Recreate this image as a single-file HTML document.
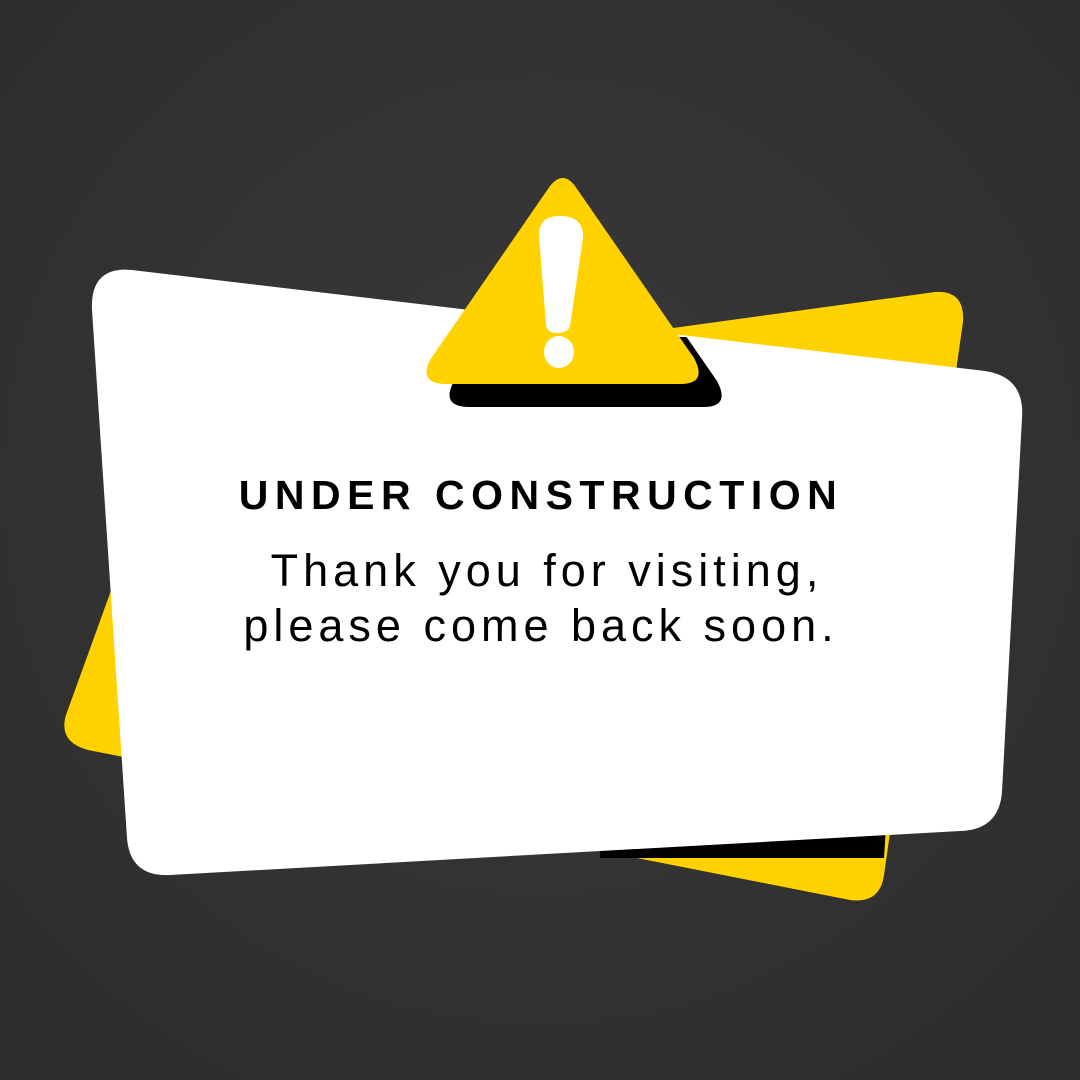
<!DOCTYPE html>
<html><head><meta charset="utf-8"><style>
html,body{margin:0;padding:0;}
body{width:1080px;height:1080px;overflow:hidden;background:radial-gradient(circle at 50% 45%,#3a3939 0%,#333232 55%,#2d2c2c 100%);}
svg{position:absolute;left:0;top:0;}
</style></head><body>
<svg width="1080" height="1080" viewBox="0 0 1080 1080" xmlns="http://www.w3.org/2000/svg">
  <defs>
    <clipPath id="low"><rect x="0" y="337" width="1080" height="200"/></clipPath>
  </defs>
  <!-- yellow back card -->
  <path d="M200 393 L935 292 Q965 290 963 322 L884 875 Q880 904 850 900 L88 750 Q58 742 66 715 L180 400 Z" fill="#FFD200"/>
  <!-- black strip -->
  <path d="M600 848 L886 826 L884 858 L600 858 Z" fill="#000"/>
  <!-- white card -->
  <path d="M132 270 L985 371 Q1025 377 1022 418 L1002 792 Q999 830 960 831 L170 875 Q130 877 127 838 L92 310 Q90 266 132 270 Z" fill="#fff"/>
  <!-- triangle shadow -->
  <path clip-path="url(#low)" d="M598 209 Q586 193 573 209 L453 383 Q441 407 470 407 L703 407 Q731 407 717 381 Z" fill="#000"/>
  <!-- triangle -->
  <path d="M575 186 Q563 170 550 186 L430 360 Q418 384 447 384 L680 384 Q708 384 694 358 Z" fill="#FFD200"/>
  <!-- exclamation -->
  <path d="M539 236 Q538 216 560 216 Q584 216 583 238 L570 326 Q568 333 557 333 Q547 333 546 325 Z" fill="#fff"/>
  <ellipse cx="559" cy="352" rx="15" ry="16" fill="#fff"/>
  <!-- text -->
  <text x="541" y="509" text-anchor="middle" font-family="Liberation Sans, sans-serif" font-weight="bold" font-size="41" letter-spacing="6.5" fill="#000">UNDER CONSTRUCTION</text>
  <text x="547" y="586" text-anchor="middle" font-family="Liberation Sans, sans-serif" font-size="45" letter-spacing="5" fill="#000">Thank you for visiting,</text>
  <text x="541" y="641" text-anchor="middle" font-family="Liberation Sans, sans-serif" font-size="45" letter-spacing="5" fill="#000">please come back soon.</text>
</svg>
</body></html>
